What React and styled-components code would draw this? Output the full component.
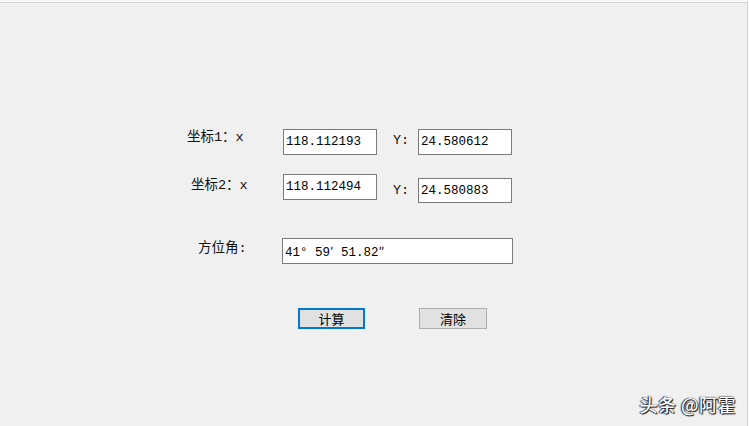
import React from 'react';
import styled, { createGlobalStyle } from 'styled-components';

const Global = createGlobalStyle`
  html, body {
    margin: 0;
    padding: 0;
    background: #f7f7f7;
  }
  body {
    font-family: "Liberation Mono", "Noto Sans CJK SC", monospace;
  }
`;

const Frame = styled.div`
  position: relative;
  box-sizing: border-box;
  width: 748px;
  height: 424px;
  margin-top: 2px;
  background: #f0f0f0;
  border-top: 1px solid #d5d5d5;
  border-right: 1px solid #d5d5d5;
`;

const Form = styled.div`
  display: flex;
  flex-direction: column;
  padding: 126px 0 0 187px;
`;

const Row = styled.div`
  display: flex;
  align-items: flex-start;
  margin-top: ${(p) => p.$top || 0}px;
`;

const Label = styled.div`
  box-sizing: border-box;
  width: ${(p) => p.$width}px;
  margin-left: ${(p) => p.$left || 0}px;
  padding-top: ${(p) => p.$pad || 0}px;
  font-size: 13.5px;
  line-height: 16px;
  color: #111;
  white-space: nowrap;
`;

const Field = styled.div`
  box-sizing: border-box;
  width: ${(p) => p.$width || 94}px;
  height: ${(p) => p.$height || 26}px;
  margin-top: ${(p) => p.$top || 0}px;
  padding: 4px 2px 0;
  background: #fff;
  border: 1px solid #7a7a7a;
  font-size: 12.5px;
  line-height: 16px;
  color: #000;
  white-space: nowrap;
`;

const Mark = styled.span`
  font-family: "Noto Sans CJK SC", sans-serif;
`;

const Buttons = styled.div`
  display: flex;
  margin-top: 44px;
  padding-left: 111px;
  gap: 54px;
`;

const Button = styled.button`
  box-sizing: border-box;
  width: ${(p) => p.$width}px;
  height: 21px;
  padding: 0;
  background: #e1e1e1;
  border: ${(p) => (p.$focus ? '2px solid #0078d7' : '1px solid #adadad')};
  border-radius: 0;
  font-family: "Noto Sans CJK SC", sans-serif;
  font-size: 13px;
  line-height: 17px;
  color: #000;
`;

const Watermark = styled.div`
  position: absolute;
  right: 11px;
  bottom: 9px;
  font-family: "Noto Sans CJK SC", sans-serif;
  font-size: 18px;
  font-weight: 500;
  color: #fff;
  text-shadow: 1px 1px 1px #111, 0 0 1px #000, -1px 0 1px #333;
  letter-spacing: 0.5px;
`;

export default function App() {
  return (
    <>
      <Global />
      <Frame>
        <Form>
          <Row>
            <Label $width={96} $pad={1}>坐标1：x</Label>
            <Field>118.112193</Field>
            <Label $width={25} $left={16} $pad={4}>Y:</Label>
            <Field>24.580612</Field>
          </Row>
          <Row $top={19}>
            <Label $width={92} $left={4} $pad={4}>坐标2：x</Label>
            <Field>118.112494</Field>
            <Label $width={25} $left={16} $pad={9}>Y:</Label>
            <Field $top={4} $height={25}>24.580883</Field>
          </Row>
          <Row $top={35}>
            <Label $width={84} $left={11} $pad={3}>方位角:</Label>
            <Field $width={231}>
              41° 59<Mark>′</Mark> 51.82<Mark>″</Mark>
            </Field>
          </Row>
          <Buttons>
            <Button $width={67} $focus>计算</Button>
            <Button $width={68}>清除</Button>
          </Buttons>
        </Form>
        <Watermark>头条 @阿霍</Watermark>
      </Frame>
    </>
  );
}
